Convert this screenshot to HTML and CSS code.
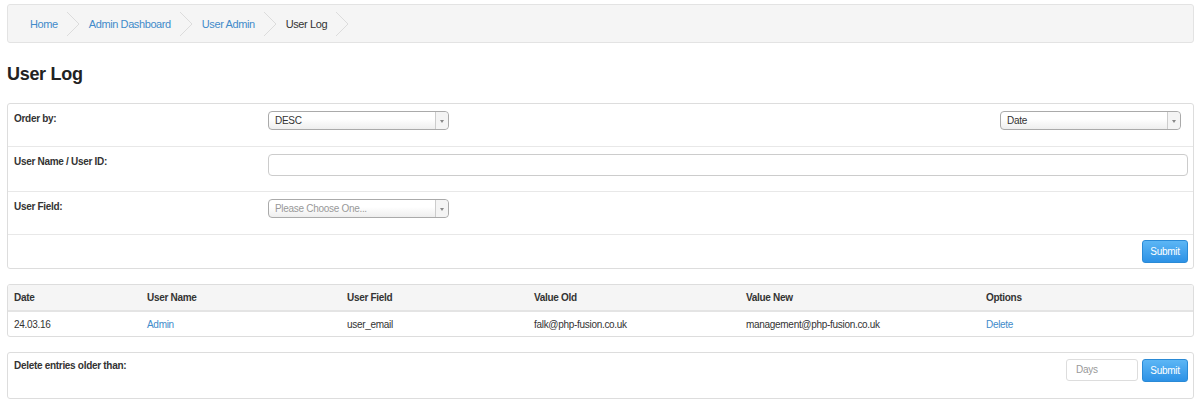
FILE: index.html
```html
<!DOCTYPE html>
<html lang="en">
<head>
<meta charset="UTF-8">
<title>User Log</title>
<link rel="stylesheet" href="styles.css">
</head>
<body>
<div class="crumbs">
    <a href="#">Home</a>
    <svg class="sep" width="14" height="24" viewBox="0 0 14 24"><polyline points="1,0 13,12 1,24" fill="none" stroke="#dcdcdc" stroke-width="1"/></svg>
    <a href="#">Admin Dashboard</a>
    <svg class="sep" width="14" height="24" viewBox="0 0 14 24"><polyline points="1,0 13,12 1,24" fill="none" stroke="#dcdcdc" stroke-width="1"/></svg>
    <a href="#">User Admin</a>
    <svg class="sep" width="14" height="24" viewBox="0 0 14 24"><polyline points="1,0 13,12 1,24" fill="none" stroke="#dcdcdc" stroke-width="1"/></svg>
    <span>User Log</span>
    <svg class="sep" width="14" height="24" viewBox="0 0 14 24"><polyline points="1,0 13,12 1,24" fill="none" stroke="#dcdcdc" stroke-width="1"/></svg>
</div>

<h1 class="title">User Log</h1>

<div class="panel form-panel">
    <div class="frow">
        <label class="flabel">Order by:</label>
        <div class="fields spread">
            <div class="sel"><span>DESC</span><i class="arr"></i></div>
            <div class="sel"><span>Date</span><i class="arr"></i></div>
        </div>
    </div>
    <div class="frow">
        <label class="flabel">User Name / User ID:</label>
        <div class="fields"><div class="txt"></div></div>
    </div>
    <div class="frow">
        <label class="flabel">User Field:</label>
        <div class="fields">
            <div class="sel ph"><span>Please Choose One...</span><i class="arr"></i></div>
        </div>
    </div>
    <div class="ffoot">
        <button class="btn">Submit</button>
    </div>
</div>

<div class="panel table-panel">
    <table class="log">
        <thead>
            <tr>
                <th class="c1">Date</th>
                <th class="c2">User Name</th>
                <th class="c3">User Field</th>
                <th class="c4">Value Old</th>
                <th class="c5">Value New</th>
                <th>Options</th>
            </tr>
        </thead>
        <tbody>
            <tr>
                <td>24.03.16</td>
                <td><a href="#">Admin</a></td>
                <td>user_email</td>
                <td>falk@php-fusion.co.uk</td>
                <td>management@php-fusion.co.uk</td>
                <td><a href="#">Delete</a></td>
            </tr>
        </tbody>
    </table>
</div>

<div class="panel del-panel">
    <label class="flabel">Delete entries older than:</label>
    <div class="del-actions">
        <div class="days">Days</div>
        <button class="btn">Submit</button>
    </div>
</div>
</body>
</html>
```

FILE: styles.css
```css
body {
    margin: 0;
    padding: 4px 6px 0 7px;
    font-family: "Liberation Sans", Arial, sans-serif;
    font-size: 10px;
    letter-spacing: -0.3px;
    color: #333;
    background: #fff;
}

a {
    color: #428bca;
    text-decoration: none;
}

.crumbs {
    height: 37px;
    display: flex;
    align-items: center;
    padding-left: 22px;
    background: #f5f5f5;
    border: 1px solid #e3e3e3;
    border-radius: 3px;
    font-size: 11px;
    letter-spacing: -0.4px;
}

.crumbs .sep {
    margin: 0 9px 0 8px;
}

.title {
    margin: 20px 0 0;
    height: 40px;
    font-size: 18px;
    font-weight: bold;
    line-height: 22px;
    letter-spacing: -0.3px;
    color: #222;
}

.panel {
    border: 1px solid #ddd;
    border-radius: 3px;
    background: #fff;
}

.frow {
    display: flex;
    padding: 7px 5px 0 6px;
    border-bottom: 1px solid #e8e8e8;
}

.frow:nth-child(1) { height: 35px; }
.frow:nth-child(2) { height: 37px; }
.frow:nth-child(3) { height: 35px; }

.flabel {
    width: 255px;
    font-weight: bold;
    padding-top: 2px;
}

.fields {
    flex: 1;
    display: flex;
}

.fields.spread {
    justify-content: space-between;
    padding-right: 7px;
}

.sel {
    width: 173px;
    height: 17px;
    border: 1px solid #aaa;
    border-radius: 4px;
    background: linear-gradient(#fff 40%, #eee);
    display: flex;
    align-items: center;
    justify-content: space-between;
    padding-left: 6px;
    margin-left: -1px;
}

.sel.ph span {
    color: #999;
}

.sel .arr {
    width: 12px;
    height: 17px;
    border-left: 1px solid #ccc;
    background: #f4f4f4;
    border-radius: 0 4px 4px 0;
    position: relative;
}

.sel .arr::after {
    content: "";
    position: absolute;
    left: 4px;
    top: 8px;
    border-left: 2px solid transparent;
    border-right: 2px solid transparent;
    border-top: 3px solid #888;
}

.txt {
    flex: 1;
    height: 20px;
    border: 1px solid #ccc;
    border-radius: 4px;
    margin-left: -1px;
}

.ffoot {
    display: flex;
    justify-content: flex-end;
    padding: 5px 5px 5px 0;
    height: 23px;
}

.btn {
    width: 46px;
    height: 23px;
    border: 1px solid #2a8ad6;
    border-radius: 3px;
    background: linear-gradient(#5cb6f5, #2d92e6);
    color: #fff;
    font-family: "Liberation Sans", Arial, sans-serif;
    font-size: 10px;
    letter-spacing: -0.3px;
    padding: 0;
}

.table-panel {
    margin-top: 15px;
    overflow: hidden;
}

.log {
    width: 100%;
    border-collapse: collapse;
}

.log th {
    text-align: left;
    font-weight: bold;
    background: #f5f5f5;
    height: 25px;
    padding: 0 6px;
    border-bottom: 2px solid #e4e4e4;
}

.log td {
    height: 24px;
    padding: 0 6px;
}

.log .c1 { width: 121px; }
.log .c2 { width: 188px; }
.log .c3 { width: 175px; }
.log .c4 { width: 200px; }
.log .c5 { width: 228px; }

.del-panel {
    margin-top: 15px;
    height: 45px;
    display: flex;
    justify-content: space-between;
    padding: 0 5px 0 6px;
}

.del-panel .flabel {
    padding-top: 7px;
}

.del-actions {
    display: flex;
    gap: 4px;
    padding-top: 6px;
}

.days {
    width: 61px;
    height: 20px;
    border: 1px solid #ddd;
    border-radius: 3px;
    color: #999;
    line-height: 20px;
    padding-left: 9px;
}
```
